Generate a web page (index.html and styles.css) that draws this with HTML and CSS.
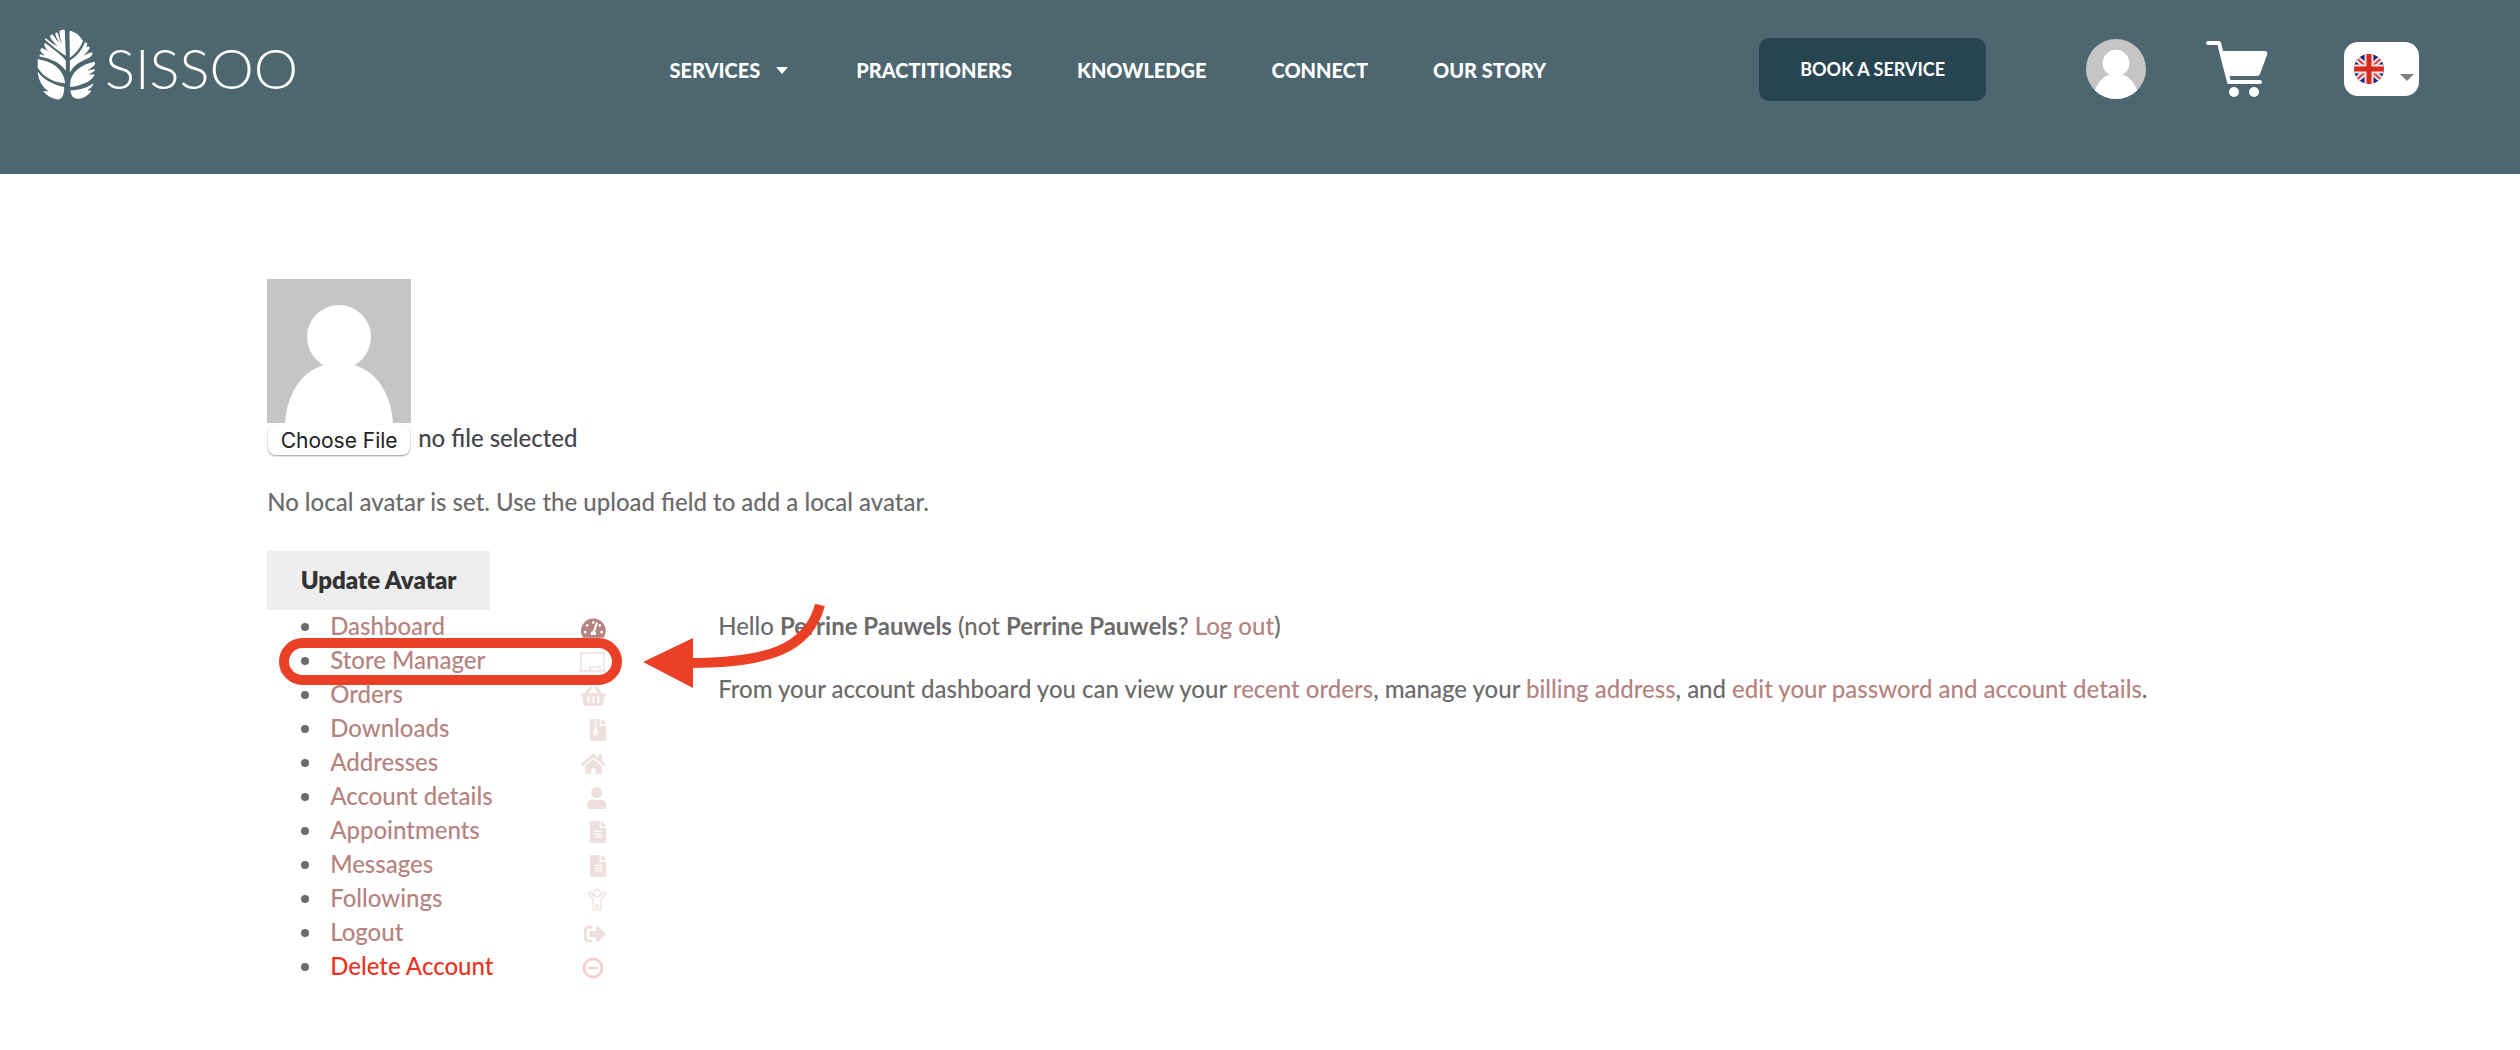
FILE: index.html
```html
<!DOCTYPE html>
<html lang="en">
<head>
  <meta charset="UTF-8">
  <meta name="viewport" content="width=device-width, initial-scale=1.0">
  <title>My Account - Sissoo</title>
  <link rel="stylesheet" href="styles.css">
</head>
<body>
  <header class="site-header">
    <a class="logo" href="#">
      <svg class="logo-leaf" viewBox="50 58 176 210" aria-hidden="true">
        <path d="M133 60L136 138C120 128 100 112 76 91C70 84 76 84 82 89C92 98 102 104 112 108C102 98 92 88 89 80C91 72 96 72 101 79C106 87 112 95 119 100C111 88 104 77 105 69C108 66 111 67 113 72C116 82 119 92 124 101C120 86 117 74 117 63C122 60 128 59 133 60Z"/>
        <path d="M147 62C164 65 179 77 187 93C180 112 166 130 148 143Z"/>
        <path d="M73 98C95 114 122 133 136 151L136 182C122 160 96 146 58 139C56 130 62 133 74 137C68 130 59 126 60 118C64 111 72 117 84 124C76 115 69 106 73 98Z"/>
        <path d="M52 147C80 151 128 165 134 219C110 219 70 205 52 172Z"/>
        <path d="M52 184C70 211 106 226 131 230C132 250 126 268 110 267C94 264 78 255 68 242C74 243 80 243 84 242C70 234 54 214 52 184Z"/>
        <path d="M148 151C172 136 186 116 192 98C200 96 203 101 196 114C203 107 209 109 206 116C202 123 196 130 188 137C200 131 214 123 216 129C215 138 208 142 199 146C180 154 162 163 148 187Z"/>
        <path d="M149 220C151 186 180 164 222 155C225 162 222 167 214 171C206 176 202 180 203 182C211 178 222 174 223 180C220 185 211 189 203 193C211 193 220 190 222 194C211 216 178 226 149 230Z"/>
        <path d="M150 240C176 240 200 233 218 219C217 229 209 235 200 239C205 241 210 239 212 242C202 258 182 267 168 265C156 263 151 254 150 240Z"/>
      </svg>
      <span class="logo-text">SISSOO</span>
    </a>
    <nav class="main-nav">
      <a href="#">SERVICES <span class="caret"></span></a>
      <a href="#">PRACTITIONERS</a>
      <a href="#">KNOWLEDGE</a>
      <a href="#">CONNECT</a>
      <a href="#">OUR STORY</a>
    </nav>
    <div class="header-tools">
      <a class="book-btn" href="#">BOOK A SERVICE</a>
      <a class="user-link" href="#" aria-label="My account">
        <svg viewBox="0 0 144 144">
          <rect width="144" height="144" fill="#c5c5c5"/>
          <circle cx="72" cy="58" r="32" fill="#fff"/>
          <path d="M18 144C20 112 38 84 72 84S124 112 126 144Z" fill="#fff"/>
        </svg>
      </a>
      <a class="cart-link" href="#" aria-label="Cart">
        <svg viewBox="0 0 62 56">
          <path d="M2 2H13L23 41H54" fill="none" stroke="#fff" stroke-width="4" stroke-linecap="round" stroke-linejoin="round"/>
          <path d="M16 10H60Q62 11 61 14L54 33Q53 35 51 35H22Z" fill="#fff"/>
          <circle cx="28" cy="51" r="5" fill="#fff"/>
          <circle cx="48" cy="51" r="5" fill="#fff"/>
        </svg>
      </a>
      <button class="lang-btn" type="button" aria-label="Language">
        <svg class="flag" viewBox="0 0 30 30">
          <defs><clipPath id="round"><circle cx="15" cy="15" r="15"/></clipPath></defs>
          <g clip-path="url(#round)">
            <rect width="30" height="30" fill="#1c2480"/>
            <path d="M0 2L30 28M30 2L0 28" stroke="#f3e3e6" stroke-width="6"/>
            <path d="M0 2L30 28M30 2L0 28" stroke="#dd3b33" stroke-width="2"/>
            <path d="M15 0V30M0 15H30" stroke="#f7dcdc" stroke-width="9"/>
            <path d="M15 0V30M0 15H30" stroke="#d52b1e" stroke-width="5"/>
          </g>
        </svg>
        <span class="lang-caret"></span>
      </button>
    </div>
  </header>

  <main class="page">
    <form class="avatar-form">
      <svg class="avatar" viewBox="0 0 144 144" role="img" aria-label="Avatar">
        <rect width="144" height="144" fill="#c5c5c5"/>
        <circle cx="72" cy="58" r="32" fill="#fff"/>
        <path d="M18 144C20 112 38 84 72 84S124 112 126 144Z" fill="#fff"/>
      </svg>
      <div class="file-row">
        <input type="file" id="avatar-file">
        <label for="avatar-file">no file selected</label>
      </div>
      <p>No local avatar is set. Use the upload field to add a local avatar.</p>
      <button class="update-btn" type="submit">Update Avatar</button>
    </form>

    <div class="account">
      <nav class="account-nav">
        <ul>
          <li class="active"><a href="#">Dashboard
            <svg viewBox="0 0 576 512"><path fill-rule="evenodd" d="M288 32C129 32 0 161 0 320c0 53 14 102 39 145 6 9 16 15 28 15h442c12 0 22-6 28-15 25-43 39-92 39-145C576 161 447 32 288 32zm0 64c15 0 27 10 30 24l-12 34c-5 4-11 6-18 6a32 32 0 0 1 0-64zM96 384a32 32 0 1 1 0-64 32 32 0 0 1 0 64zm48-160a32 32 0 1 1 0-64 32 32 0 0 1 0 64zm247-72l-62 184c14 11 23 29 23 48 0 12-3 23-9 32H233c-6-9-9-20-9-32 0-34 27-61 60-64l61-184c4-12 18-19 31-15 12 4 19 18 15 31zm15 58l16-47c3-2 6-3 10-3a32 32 0 1 1-26 50zm74 174a32 32 0 1 1 0-64 32 32 0 0 1 0 64z"/></svg></a></li>
          <li><a href="#">Store Manager
            <svg viewBox="0 0 28 22"><path d="M3 20V2H26V20M1 20H28M12 20V16H22V20" fill="none" stroke="currentColor" stroke-width="1.5"/></svg></a>
            <span class="highlight"></span>
            <svg class="arrow" viewBox="0 0 182 84" aria-hidden="true">
              <path d="M177 1C165 45 125 59 46 59" fill="none" stroke="#ea4026" stroke-width="10"/>
              <path d="M0 58L50 34V84Z"/>
            </svg>
          </li>
          <li><a href="#">Orders
            <svg viewBox="0 0 576 512"><path fill-rule="evenodd" d="M576 216v16c0 13-11 24-24 24h-8l-26 182c-3 24-23 42-47 42H105c-24 0-44-18-47-42L32 256h-8c-13 0-24-11-24-24v-16c0-13 11-24 24-24h67L199 44c10-14 30-17 44-7s17 30 7 44l-81 111h238L326 81c-10-14-7-34 7-44s34-7 44 7l108 148h67c13 0 24 11 24 24zM312 392V280a24 24 0 0 0-48 0v112a24 24 0 0 0 48 0zm112 0V280a24 24 0 0 0-48 0v112a24 24 0 0 0 48 0zm-224 0V280a24 24 0 0 0-48 0v112a24 24 0 0 0 48 0z"/></svg></a></li>
          <li><a href="#">Downloads
            <svg viewBox="0 0 384 512"><path fill-rule="evenodd" d="M224 136V0h-64v32h-32V0H24C11 0 0 11 0 24v464c0 13 11 24 24 24h336c13 0 24-11 24-24V160H248c-13 0-24-11-24-24zM96 32h32v32H96zm32 32h32v32h-32zM96 96h32v32H96zm32 32h32v32h-32zM96 160h32v32H96zm32 32h32v32h-32zm-32 32h64l24 115c7 36-20 69-56 69s-63-33-56-69zm32 108c-18 0-32 10-32 24s14 24 32 24 32-10 32-24-14-24-32-24zM377 105L279 7c-4-4-11-7-17-7h-6v128h128v-6c0-6-3-12-7-17z"/></svg></a></li>
          <li><a href="#">Addresses
            <svg viewBox="0 0 576 512"><path d="M280 148L96 300v164c0 9 7 16 16 16h112c9 0 16-7 16-16v-96c0-9 7-16 16-16h64c9 0 16 7 16 16v96c0 9 7 16 16 16h112c9 0 16-7 16-16V300L296 148c-5-4-11-4-16 0zM572 251l-84-69V44c0-7-5-12-12-12h-56c-7 0-12 5-12 12v72l-90-73c-18-15-43-15-61 0L4 251c-5 4-6 12-2 17l26 31c4 5 12 6 17 2L280 107c5-4 11-4 16 0l235 194c5 4 13 3 17-2l26-31c4-5 3-13-2-17z"/></svg></a></li>
          <li><a href="#">Account details
            <svg viewBox="0 0 448 512"><path d="M224 256a128 128 0 1 0 0-256 128 128 0 0 0 0 256zm90 32h-17c-46 21-100 21-146 0h-17C60 288 0 348 0 422v42c0 27 21 48 48 48h352c27 0 48-21 48-48v-42c0-74-60-134-134-134z"/></svg></a></li>
          <li><a href="#">Appointments
            <svg viewBox="0 0 384 512"><path fill-rule="evenodd" d="M224 136V0H24C11 0 0 11 0 24v464c0 13 11 24 24 24h336c13 0 24-11 24-24V160H248c-13 0-24-11-24-24zm64 248H96v-28h192zm0-64H96v-28h192zm0-64H96v-28h192zM377 105L279 7c-4-4-11-7-17-7h-6v128h128v-6c0-6-3-12-7-17z"/></svg></a></li>
          <li><a href="#">Messages
            <svg viewBox="0 0 384 512"><path fill-rule="evenodd" d="M224 136V0H24C11 0 0 11 0 24v464c0 13 11 24 24 24h336c13 0 24-11 24-24V160H248c-13 0-24-11-24-24zm64 248H96v-28h192zm0-64H96v-28h192zm0-64H96v-28h192zM377 105L279 7c-4-4-11-7-17-7h-6v128h128v-6c0-6-3-12-7-17z"/></svg></a></li>
          <li><a href="#">Followings
            <svg viewBox="0 0 18 22"><g fill="none" stroke="currentColor" stroke-width="1.3" stroke-linejoin="round"><circle cx="9" cy="4.300" r="3.500"/><path d="M6.300 7L3.300 3.600Q2 2.500 1 3.600T1 5.500L5 10V20Q5 21.300 6.500 21.300T8 20V15.500H10V20Q10 21.300 11.500 21.300T13 20V10L17 5.500Q18 4.500 17 3.600T14.700 3.600L11.700 7"/></g></svg></a></li>
          <li><a href="#">Logout
            <svg viewBox="0 0 512 512"><path d="M497 273L329 441c-15 15-41 5-41-17v-96H152c-13 0-24-11-24-24v-96c0-13 11-24 24-24h136V88c0-21 26-32 41-17l168 168c9 9 9 25 0 34zM192 436v-40c0-7-5-12-12-12H96c-18 0-32-14-32-32V160c0-18 14-32 32-32h84c7 0 12-5 12-12V76c0-7-5-12-12-12H96c-53 0-96 43-96 96v192c0 53 43 96 96 96h84c7 0 12-5 12-12z"/></svg></a></li>
          <li class="delete"><a href="#">Delete Account
            <svg viewBox="0 0 24 22"><circle cx="11" cy="11" r="9" fill="none" stroke="currentColor" stroke-width="2.500"/><path d="M7 11H15" stroke="currentColor" stroke-width="2" stroke-linecap="round"/></svg></a></li>
        </ul>
      </nav>
      <section class="account-content">
        <p>Hello <strong>Perrine Pauwels</strong> (not <strong>Perrine Pauwels</strong>? <a href="#">Log out</a>)</p>
        <p>From your account dashboard you can view your <a href="#">recent orders</a>, manage your <a href="#">billing address</a>, and <a href="#">edit your password and account details</a>.</p>
      </section>
    </div>
  </main>
</body>
</html>
```
FILE: styles.css
```css
* {
  box-sizing: border-box;
}
body {
  font-family: Lato, "Liberation Sans", sans-serif;
  font-size: 24px;
  font-weight: 500;
  line-height: 34px;
  margin: 0;
  color: #6b6b6b;
  background-color: #fff;
}
a {
  color: #b5837f;
  text-decoration: none;
}
p {
  margin: 0;
}
svg {
  display: block;
}
.site-header {
  display: flex;
  align-items: flex-start;
  height: 174px;
  padding: 28px 101px 0 37px;
  background-color: #4d666f;
}
.logo {
  display: flex;
  align-items: center;
  gap: 9px;
  height: 72px;
  color: #fff;
}
.logo-leaf {
  width: 59px;
  height: 71px;
  fill: #fff;
}
.logo-text {
  padding-top: 8px;
  font-size: 56px;
  font-weight: 300;
  line-height: 72px;
}
.main-nav {
  display: flex;
  gap: 65px;
  margin-left: auto;
  padding-top: 25px;
}
.main-nav a {
  display: flex;
  align-items: center;
  color: #fff;
  font-size: 20px;
  font-weight: 900;
  line-height: 34px;
}
.caret {
  margin: 0 3px 0 16px;
  border: 6px solid transparent;
  border-top: 7px solid #fff;
  border-bottom: 0;
}
.header-tools {
  display: flex;
  align-items: center;
  height: 82px;
  margin-left: 213px;
}
.book-btn {
  padding: 0 41px;
  border-radius: 10px;
  background-color: #264551;
  color: #fff;
  font-size: 18px;
  font-weight: 700;
  line-height: 63px;
}
.user-link {
  margin-left: 100px;
}
.user-link svg {
  width: 60px;
  height: 60px;
  border-radius: 50%;
}
.cart-link {
  margin-left: 60px;
}
.cart-link svg {
  width: 62px;
  height: 56px;
}
.lang-btn {
  display: flex;
  align-items: center;
  justify-content: space-between;
  width: 75px;
  height: 54px;
  margin-left: 76px;
  padding: 0 5px 0 10px;
  border: none;
  border-radius: 14px;
  background-color: #fff;
}
.flag {
  width: 30px;
  height: 30px;
}
.lang-caret {
  margin-top: 16px;
  border: 7px solid transparent;
  border-top-color: #808080;
  border-bottom: 0;
}
.page {
  width: 78.8%;
  margin: 0 auto;
  padding: 105px 0 60px;
}
.avatar {
  width: 144px;
  height: 144px;
}
.file-row {
  display: flex;
  gap: 7px;
  height: 34px;
  color: #45464b;
  line-height: 30px;
}
.file-row input {
  width: 144px;
  height: 34px;
  padding: 2px 1px;
  overflow: hidden;
  color: transparent;
}
.file-row input::file-selector-button {
  width: 142px;
  height: 30px;
  margin: 0;
  padding: 0;
  border: none;
  border-radius: 8px;
  background-color: #fff;
  box-shadow: 0 1px 2px rgba(0, 0, 0, 0.4);
  color: #222;
  font-family: Inter, sans-serif;
  font-size: 21px;
  font-weight: 400;
}
.avatar-form p {
  padding: 28px 0 32px;
}
.update-btn {
  display: block;
  min-width: 223px;
  height: 59px;
  padding: 0 28px 2px;
  border: none;
  background-color: #eee;
  color: #333;
  font-family: inherit;
  font-size: 24px;
  font-weight: 800;
  cursor: pointer;
}
.account {
  display: grid;
  grid-template-columns: 339px 1fr;
  column-gap: 112px;
  margin-top: -1px;
}
.account-nav ul {
  margin: 0;
  padding-left: 57px;
}
.account-nav li {
  position: relative;
  padding-left: 6px;
}
.account-nav a {
  display: flex;
  justify-content: space-between;
  align-items: center;
}
.account-nav a svg {
  height: 22px;
  margin-top: 3px;
  fill: currentColor;
  opacity: 0.25;
}
.account-nav .active svg {
  opacity: 1;
}
.account-nav .delete a {
  color: #ea3323;
}
/* callout round the Store Manager entry */
.highlight {
  position: absolute;
  top: -5px;
  left: -45px;
  width: 343px;
  height: 47px;
  border: 10px solid #ea4026;
  border-radius: 24px;
}
.arrow {
  position: absolute;
  z-index: 1;
  top: -39px;
  left: 319px;
  width: 182px;
  height: 84px;
  fill: #ea4026;
}
.account-content p {
  margin-bottom: 29px;
}
```
